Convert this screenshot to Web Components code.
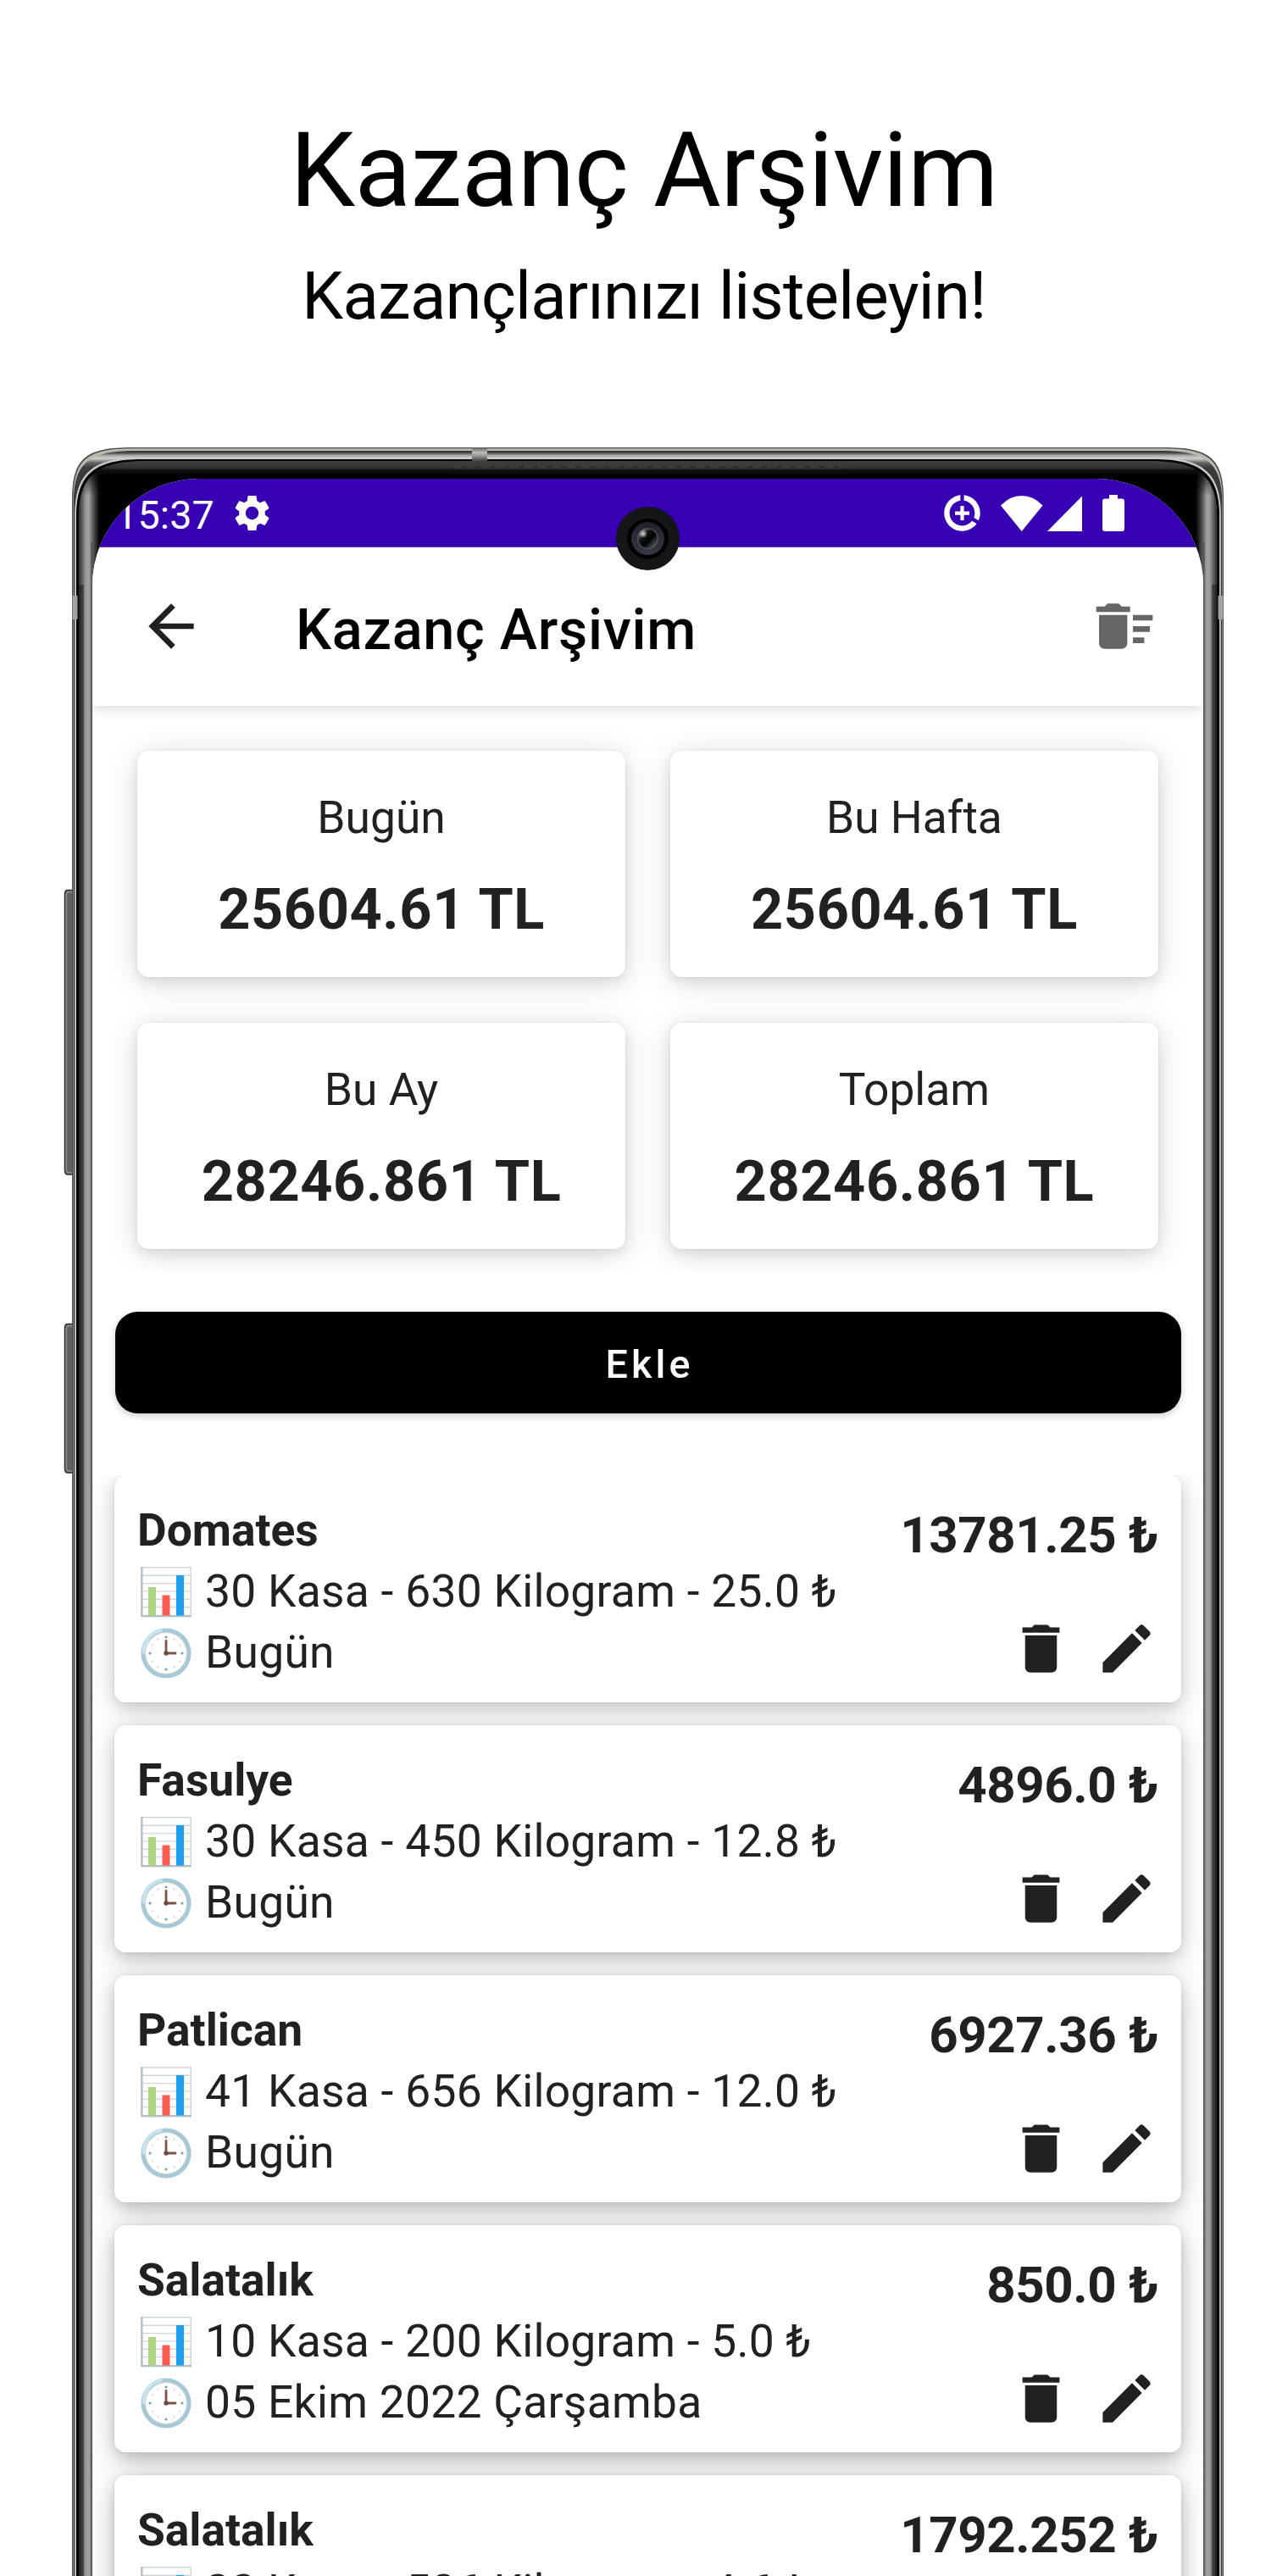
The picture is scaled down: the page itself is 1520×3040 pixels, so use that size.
<!DOCTYPE html>
<html lang="tr">
<head>
<meta charset="utf-8">
<title>Kazanç Arşivim</title>
<style>
html,body{margin:0;padding:0;background:#fff}
body{width:1520px;height:3040px;overflow:hidden;font-family:Roboto,"Noto Sans",sans-serif}
</style>
</head>
<body>
<promo-page>
  <span slot="title">Kazanç Arşivim</span>
  <span slot="subtitle">Kazançlarınızı listeleyin!</span>
  <phone-screen>
    <status-bar></status-bar>
    <app-bar>Kazanç Arşivim</app-bar>
    <stat-grid>
      <stat-card label="Bugün">25604.61 TL</stat-card>
      <stat-card label="Bu Hafta">25604.61 TL</stat-card>
      <stat-card label="Bu Ay">28246.861 TL</stat-card>
      <stat-card label="Toplam">28246.861 TL</stat-card>
    </stat-grid>
    <add-button>Ekle</add-button>
    <entry-list>
      <entry-card name="Domates" amount="30 Kasa - 630 Kilogram - 25.0 ₺" date="Bugün" price="13781.25 ₺" style="--depth:.18"></entry-card>
      <entry-card name="Fasulye" amount="30 Kasa - 450 Kilogram - 12.8 ₺" date="Bugün" price="4896.0 ₺" style="--depth:.2"></entry-card>
      <entry-card name="Patlican" amount="41 Kasa - 656 Kilogram - 12.0 ₺" date="Bugün" price="6927.36 ₺" style="--depth:.22"></entry-card>
      <entry-card name="Salatalık" amount="10 Kasa - 200 Kilogram - 5.0 ₺" date="05 Ekim 2022 Çarşamba" price="850.0 ₺" style="--depth:.24"></entry-card>
      <entry-card name="Salatalık" amount="22 Kasa - 506 Kilogram - 4.6 ₺" date="05 Ekim 2022 Çarşamba" price="1792.252 ₺" style="--depth:.25"></entry-card>
    </entry-list>
  </phone-screen>
</promo-page>

<script>
const define = (name, render) => customElements.define(name, class extends HTMLElement {
  connectedCallback() {
    if (this.shadowRoot) return;
    this.attachShadow({mode: 'open'}).innerHTML = render(this);
  }
});

/* Open-bottomed outline with softened top corners, mirrored about the phone axis x = 764.5 */
const outline = (l, t, rx, ry, k) => {
  const r = 1529 - l;
  return `M${l} 3050V${t+ry}C${l} ${t+ry*(1-k)} ${l+rx*(1-k)} ${t} ${l+rx} ${t}H${r-rx}C${r-rx*(1-k)} ${t} ${r} ${t+ry*(1-k)} ${r} ${t+ry}V3050Z`;
};

define('phone-frame', () => {
  let dashes = '';
  for (let x = 543; x < 990; x += 16.9) dashes += `<path d="M${x} 552l2-2h6l-1 2z"/>`;
  return `
<style>:host{display:block;width:1520px;height:3040px}svg{display:block}</style>
<svg width="1520" height="3040" viewBox="0 0 1520 3040">
  <defs>
    <linearGradient id="metal" gradientUnits="userSpaceOnUse" x1="0" y1="532" x2="0" y2="552">
      <stop offset="0" stop-color="#2c2c2c"/><stop offset=".12" stop-color="#4c4c4c"/><stop offset=".28" stop-color="#aaa"/><stop offset=".45" stop-color="#d2d2d2"/><stop offset=".7" stop-color="#666"/><stop offset="1" stop-color="#3a3a3a"/>
    </linearGradient>
    <linearGradient id="topglass" gradientUnits="userSpaceOnUse" x1="0" y1="544" x2="0" y2="562">
      <stop offset="0" stop-color="#444"/><stop offset=".45" stop-color="#303030"/><stop offset=".6" stop-color="#111"/><stop offset="1" stop-color="#000"/>
    </linearGradient>
    <linearGradient id="sideglass" gradientUnits="userSpaceOnUse" x1="92" y1="0" x2="120" y2="0">
      <stop offset="0" stop-color="#222"/><stop offset=".15" stop-color="#555"/><stop offset=".33" stop-color="#999"/><stop offset=".46" stop-color="#a2a2a2"/><stop offset=".6" stop-color="#666"/><stop offset=".8" stop-color="#222"/><stop offset="1" stop-color="#000" stop-opacity="0"/>
    </linearGradient>
    <linearGradient id="fade" gradientUnits="userSpaceOnUse" x1="0" y1="548" x2="0" y2="585"><stop offset="0" stop-color="#000"/><stop offset="1" stop-color="#fff"/></linearGradient>
    <mask id="m" maskUnits="userSpaceOnUse" x="0" y="500" width="1520" height="2560"><rect y="500" width="1520" height="2560" fill="url(#fade)"/></mask>
    <clipPath id="c"><path d="${outline(92.5,544,78,66,.72)}"/></clipPath>
    <linearGradient id="band" x1="0" y1="0" x2="0" y2="1"><stop offset="0" stop-color="#666"/><stop offset=".35" stop-color="#bbb"/><stop offset=".6" stop-color="#999"/><stop offset="1" stop-color="#444"/></linearGradient>
  </defs>
  <g fill="#5f6062" stroke="#2b2b2d" stroke-width="1.5">
    <path d="M90 1050.500H80Q76.500 1050.500 76.500 1055V1381Q76.500 1386 80 1386H90Z"/>
    <path d="M90 1562.500H80Q76.500 1562.500 76.500 1567V1733Q76.500 1738 80 1738H90Z"/>
  </g>
  <path d="M85 1052.500H80.500Q78.200 1053 78.200 1056V1380Q78.200 1383.500 80.500 1384H85M85 1564.500H80.500Q78.200 1565 78.200 1568V1732Q78.200 1735.500 80.500 1736H85" fill="none" stroke="#85868a" stroke-width="2"/>
  <path d="${outline(85,528,70,62,.78)}" fill="#4b4d4a"/>
  <path d="${outline(86.300,529.300,70,62,.78)}" fill="#b9bbae"/>
  <path d="${outline(86.800,532,72,62,.76)}" fill="url(#metal)"/>
  <path d="${outline(88.200,540,78,68,.73)}" fill="#c9c9c9"/>
  <path d="${outline(90,542,78,67,.73)}" fill="#000"/>
  <path d="${outline(92.500,544,78,66,.72)}" fill="url(#topglass)"/>
  <g clip-path="url(#c)"><g mask="url(#m)">
    <rect x="92" y="540" width="29" height="2510" fill="url(#sideglass)"/>
    <rect x="92" y="540" width="29" height="2510" fill="url(#sideglass)" transform="matrix(-1 0 0 1 1529 0)"/>
    <path d="M92 690H99V3050H92ZM1430 690H1437V3050H1430Z" fill="#000" opacity=".35"/>
  </g></g>
  <path d="M109 640V3050M1420 640V3050" stroke="#555" stroke-width="3"/>
  <path d="M521 544.500L534 552.500H995L1008 544.500Z" fill="#3b3b3b"/>
  <g fill="#2a2a2a">${dashes}</g>
  <rect x="557" y="528.500" width="18" height="15.500" fill="url(#band)"/>
  <path d="M85.500 703h6v28h-6zM1437.500 703h6v28h-6z" fill="#a3a3a3"/>
</svg>`;
});

define('promo-page', () => `
<style>
:host{display:grid;width:1520px;height:3040px;overflow:hidden;background:#fff;color:#000}
phone-frame,.column{grid-area:1/1}
.column{display:flex;flex-direction:column;align-items:center;height:3040px;overflow:hidden}
h1,h2{margin:0;font-weight:400;white-space:nowrap;text-align:center}
h1{margin-top:131px;font-size:122.4px;line-height:140px;letter-spacing:-.55px}
h2{margin-top:34.400px;font-size:77.800px;line-height:90px;letter-spacing:-.68px}
.screen{margin-top:170px;width:1311px;margin-left:9px}
</style>
<phone-frame></phone-frame>
<div class="column"><h1><slot name="title"></slot></h1><h2><slot name="subtitle"></slot></h2><div class="screen"><slot></slot></div></div>`);

define('phone-screen', () => `
<style>
:host{display:block;position:relative}
.glass{display:flex;flex-direction:column;height:2480px;background:#fff;border-radius:126px 126px 0 0;overflow:hidden}
.camera{position:absolute;z-index:2;left:618px;top:32.500px;width:75px;height:75px}
</style>
<div class="glass"><slot></slot></div>
<svg class="camera" viewBox="0 0 75 75">
  <defs>
    <linearGradient id="ring" x1="0" y1="0" x2="0" y2="1"><stop offset="0" stop-color="#22212b"/><stop offset="1" stop-color="#3a3746"/></linearGradient>
    <linearGradient id="lens" x1="0" y1="0" x2="1" y2="1"><stop offset=".1" stop-color="#777"/><stop offset=".35" stop-color="#151515"/><stop offset=".58" stop-color="#000"/><stop offset=".9" stop-color="#52605b"/></linearGradient>
    <radialGradient id="shine"><stop offset="0" stop-color="#ddd"/><stop offset="1" stop-color="#ddd" stop-opacity="0"/></radialGradient>
  </defs>
  <circle cx="37.500" cy="37.500" r="37.500" fill="#151618"/>
  <circle cx="37.500" cy="37" r="24.500" fill="#000"/><path d="M17 24A24.500 24.500 0 0 1 58 24" fill="none" stroke="#333" stroke-width=".8"/>
  <circle cx="37.500" cy="37.500" r="19.500" fill="url(#ring)"/>
  <circle cx="37.500" cy="37.500" r="12.300" fill="#5d5b60"/>
  <circle cx="37.500" cy="37.500" r="11.200" fill="url(#lens)"/>
  <circle cx="32" cy="32" r="5" fill="url(#shine)"/>
</svg>`);

define('status-bar', () => `
<style>
:host{display:flex;align-items:center;height:80.600px;box-sizing:border-box;padding:1px 93px 0 27px;background:#3700b3;color:#fff;border-bottom:1px solid #6b40c8;flex:none}
.time{font-size:46.700px;line-height:56px;margin-top:4px;letter-spacing:.15px}
svg{display:block;fill:#fff;flex:none}
.gear{margin-left:18.500px}
.push{flex:1}
</style>
<span class="time">15:37</span>
<svg class="gear" width="51" height="51" viewBox="0 0 24 24"><path d="M19.140 12.940c.04-.3.06-.61.06-.94 0-.32-.02-.64-.07-.94l2.030-1.580a.49.49 0 0 0 .12-.61l-1.920-3.320a.488.488 0 0 0-.59-.22l-2.390.96c-.5-.38-1.030-.7-1.620-.94l-.36-2.540a.484.484 0 0 0-.48-.41h-3.840c-.24 0-.43.17-.47.41l-.36 2.540c-.59.24-1.130.57-1.620.94l-2.390-.96c-.22-.08-.47 0-.59.22L2.740 8.870c-.12.21-.08.47.12.61l2.030 1.580c-.05.3-.09.63-.09.94s.02.64.07.94l-2.030 1.580a.49.49 0 0 0-.12.61l1.920 3.320c.12.22.37.29.59.22l2.390-.96c.5.38 1.030.7 1.620.94l.36 2.540c.05.24.24.41.48.41h3.840c.24 0 .44-.17.47-.41l.36-2.540c.59-.24 1.130-.56 1.620-.94l2.390.96c.22.08.47 0 .59-.22l1.920-3.320c.12-.22.07-.47-.12-.61l-2.010-1.580zM12 15.600c-1.980 0-3.600-1.620-3.600-3.600s1.620-3.600 3.600-3.600 3.600 1.620 3.600 3.600-1.620 3.600-3.600 3.600z"/></svg>
<span class="push"></span>
<svg width="51" height="51" viewBox="0 0 24 24"><path d="M11 8v3H8v2h3v3h2v-3h3v-2h-3V8h-2zm2-5.950v3.030c3.390.49 6 3.390 6 6.920 0 .9-.18 1.750-.48 2.540l2.600 1.530c.56-1.240.88-2.620.88-4.070 0-5.180-3.950-9.450-9-9.950zM12 19c-3.870 0-7-3.130-7-7 0-3.530 2.610-6.430 6-6.920V2.050c-5.060.5-9 4.760-9 9.950 0 5.520 4.470 10 9.990 10 3.310 0 6.240-1.610 8.060-4.090l-2.600-1.530C16.170 17.980 14.210 19 12 19z"/></svg>
<svg style="margin-left:20.500px" width="49.500" height="42" viewBox="0 0 49.500 42"><path d="M24.750 42L0 11.500Q11 0 24.750 0T49.500 11.500Z"/></svg>
<svg style="margin-left:5px" width="41" height="42" viewBox="0 0 41 42"><path d="M0 42L41 .5V42Z"/></svg>
<svg style="margin-left:24.500px" width="26" height="43" viewBox="0 0 26 43"><path d="M8 0H18V4.500H23Q26 4.500 26 7.500V40Q26 43 23 43H3Q0 43 0 40V7.500Q0 4.500 3 4.500H8Z"/></svg>`);

define('app-bar', () => `
<style>
:host{display:flex;align-items:center;height:186.700px;box-sizing:border-box;padding:0 53.300px;background:#fff;flex:none;box-shadow:0 3px 14px rgba(0,0,0,.16);position:relative;z-index:1}
.title{flex:1;margin-left:106.700px;padding-top:7px;font-size:66.670px;font-weight:500;line-height:80px;color:#000;letter-spacing:.0105em}
svg{display:block;flex:none}
</style>
<svg width="80" height="80" viewBox="0 0 24 24" fill="#212121"><path d="M20 11H7.830l5.590-5.590L12 4l-8 8 8 8 1.410-1.410L7.830 13H20v-2z"/></svg>
<div class="title"><slot></slot></div>
<svg width="80" height="80" viewBox="0 0 24 24" fill="#666"><path d="M15 16h4v2h-4zm0-8h7v2h-7zm0 4h6v2h-6zM3 18c0 1.100.9 2 2 2h6c1.100 0 2-.9 2-2V8H3v10zM14 5h-3l-1-1H6L5 5H2v2h12V5z"/></svg>`);

define('stat-grid', () => `
<style>:host{display:grid;grid-template-columns:1fr 1fr;gap:53.300px;height:667.800px;box-sizing:border-box;padding:53.300px 53.300px 26.700px;overflow:hidden;flex:none}</style><slot></slot>`);

define('stat-card', el => `
<style>
:host{display:flex;flex-direction:column;align-items:center;box-sizing:border-box;padding-top:48.300px;gap:37.500px;background:#fff;border-radius:13.300px;color:#212121;box-shadow:0 0 3px rgba(0,0,0,.08),0 6px 14px rgba(0,0,0,.08),0 5px 38px rgba(0,0,0,.14);white-space:nowrap}
.label{font-size:53.330px;line-height:62.500px}
.value{font-size:66.670px;line-height:78px;font-weight:700;letter-spacing:.009em}
</style>
<div class="label">${el.getAttribute('label')}</div><div class="value"><slot></slot></div>`);

define('add-button', () => `
<style>:host{display:flex;align-items:center;justify-content:center;box-sizing:border-box;flex:none;height:120px;margin:47.300px 26.500px 0;padding:5px 0 0 4px;border-radius:26.700px;background:#000;color:#fff;font-size:46.670px;font-weight:500;line-height:56px;letter-spacing:.0893em;box-shadow:0 3px 8px rgba(0,0,0,.2)}</style><slot></slot>`);

define('entry-list', () => `
<style>:host{display:flex;flex-direction:column;gap:26.700px;margin-top:72.900px;padding:0 26.300px;overflow:hidden;isolation:isolate;flex:1}</style><slot></slot>`);

define('chart-icon', () => `
<style>:host{display:block;flex:none}svg{display:block}</style>
<svg width="60" height="60" viewBox="0 0 60 60"><rect x=".8" y=".8" width="58.400" height="58" fill="#fff" stroke="#cfd8dc" stroke-width="1.500"/>
<path d="M1 10.300H59M1 19.600H59M1 28.900H59M1 38.200H59M1 47.500H59" stroke="#cfd8dc" stroke-width="1.400"/><path d="M1.500 0V58H60" fill="none" stroke="#b0bec5" stroke-width="2"/>
<path d="M9 24h9v33.500H9z" fill="#aed581"/><path d="M25.500 33.500h9v24h-9z" fill="#ff5b4f"/><path d="M42 10h9v47.500h-9z" fill="#1e9ff0"/></svg>`);

define('clock-icon', () => {
  let ticks = '';
  for (let i = 0; i < 12; i++) {
    const a = i * Math.PI / 6;
    ticks += `<circle cx="${30 + 19 * Math.sin(a)}" cy="${30 - 19 * Math.cos(a)}" r="${i % 3 ? 1.1 : 1.6}" fill="${i % 3 ? '#c3d5dc' : '#6aa6ba'}"/>`;
  }
  return `
<style>:host{display:block;flex:none}svg{display:block}</style>
<svg width="60" height="60" viewBox="0 0 60 60"><circle cx="30" cy="30" r="29.600" fill="#a5c9d8"/><circle cx="30" cy="30" r="24.200" fill="#fff" stroke="#ede3d0" stroke-width="1"/>
<path d="M3.500 29C4 15 12 5.500 24 3" fill="none" stroke="#c6e3ee" stroke-width="4" stroke-linecap="round"/>${ticks}
<path d="M30 15.500V30H41" fill="none" stroke="#7c5548" stroke-width="2.800" stroke-linecap="round" stroke-linejoin="round"/><circle cx="30" cy="30" r="2.700" fill="#6d4c41"/></svg>`;
});

define('entry-card', el => `
<style>
:host{display:flex;justify-content:space-between;position:relative;box-sizing:border-box;flex:none;height:268.400px;padding:30.400px 26.700px 0;border-radius:13.300px;background:#fff;color:#212121;white-space:nowrap}
:host::before{content:"";position:absolute;inset:0;z-index:-1;border-radius:13.300px;box-shadow:0 0 3px rgba(0,0,0,.1),0 7px 16px rgba(0,0,0,calc(var(--depth)*.6)),0 8px 38px rgba(0,0,0,calc(var(--depth)*.85))}
.info,.side{display:flex;flex-direction:column}
.info{font-size:53.330px;line-height:71.800px}
.name{font-weight:700}
.line{display:flex;align-items:center;gap:16px;padding-left:4px;letter-spacing:.28px}
.side{align-items:flex-end;padding-top:5.700px}
.price{font-size:60px;line-height:70.300px;font-weight:700;letter-spacing:-.4px}
.tools{display:flex;gap:26px;margin-top:61.200px}
.tools svg{display:block}
</style>
<div class="info">
  <div class="name">${el.getAttribute('name')}</div>
  <div class="line"><chart-icon></chart-icon><span>${el.getAttribute('amount')}</span></div>
  <div class="line"><clock-icon></clock-icon><span>${el.getAttribute('date')}</span></div>
</div>
<div class="side">
  <div class="price">${el.getAttribute('price')}</div>
  <div class="tools">
    <svg width="75" height="75" viewBox="0 0 24 24" fill="#212121"><path d="M6 19c0 1.100.9 2 2 2h8c1.100 0 2-.9 2-2V7H6v12zM19 4h-3.500l-1-1h-5l-1 1H5v2h14V4z"/></svg>
    <svg width="75" height="75" viewBox="0 0 24 24" fill="#212121"><path d="M3 17.250V21h3.750L17.810 9.940l-3.750-3.750L3 17.250zM20.710 7.040c.39-.39.39-1.020 0-1.410l-2.340-2.340c-.39-.39-1.020-.39-1.410 0l-1.830 1.830 3.750 3.750 1.830-1.830z"/></svg>
  </div>
</div>`);
</script>
</body>
</html>
